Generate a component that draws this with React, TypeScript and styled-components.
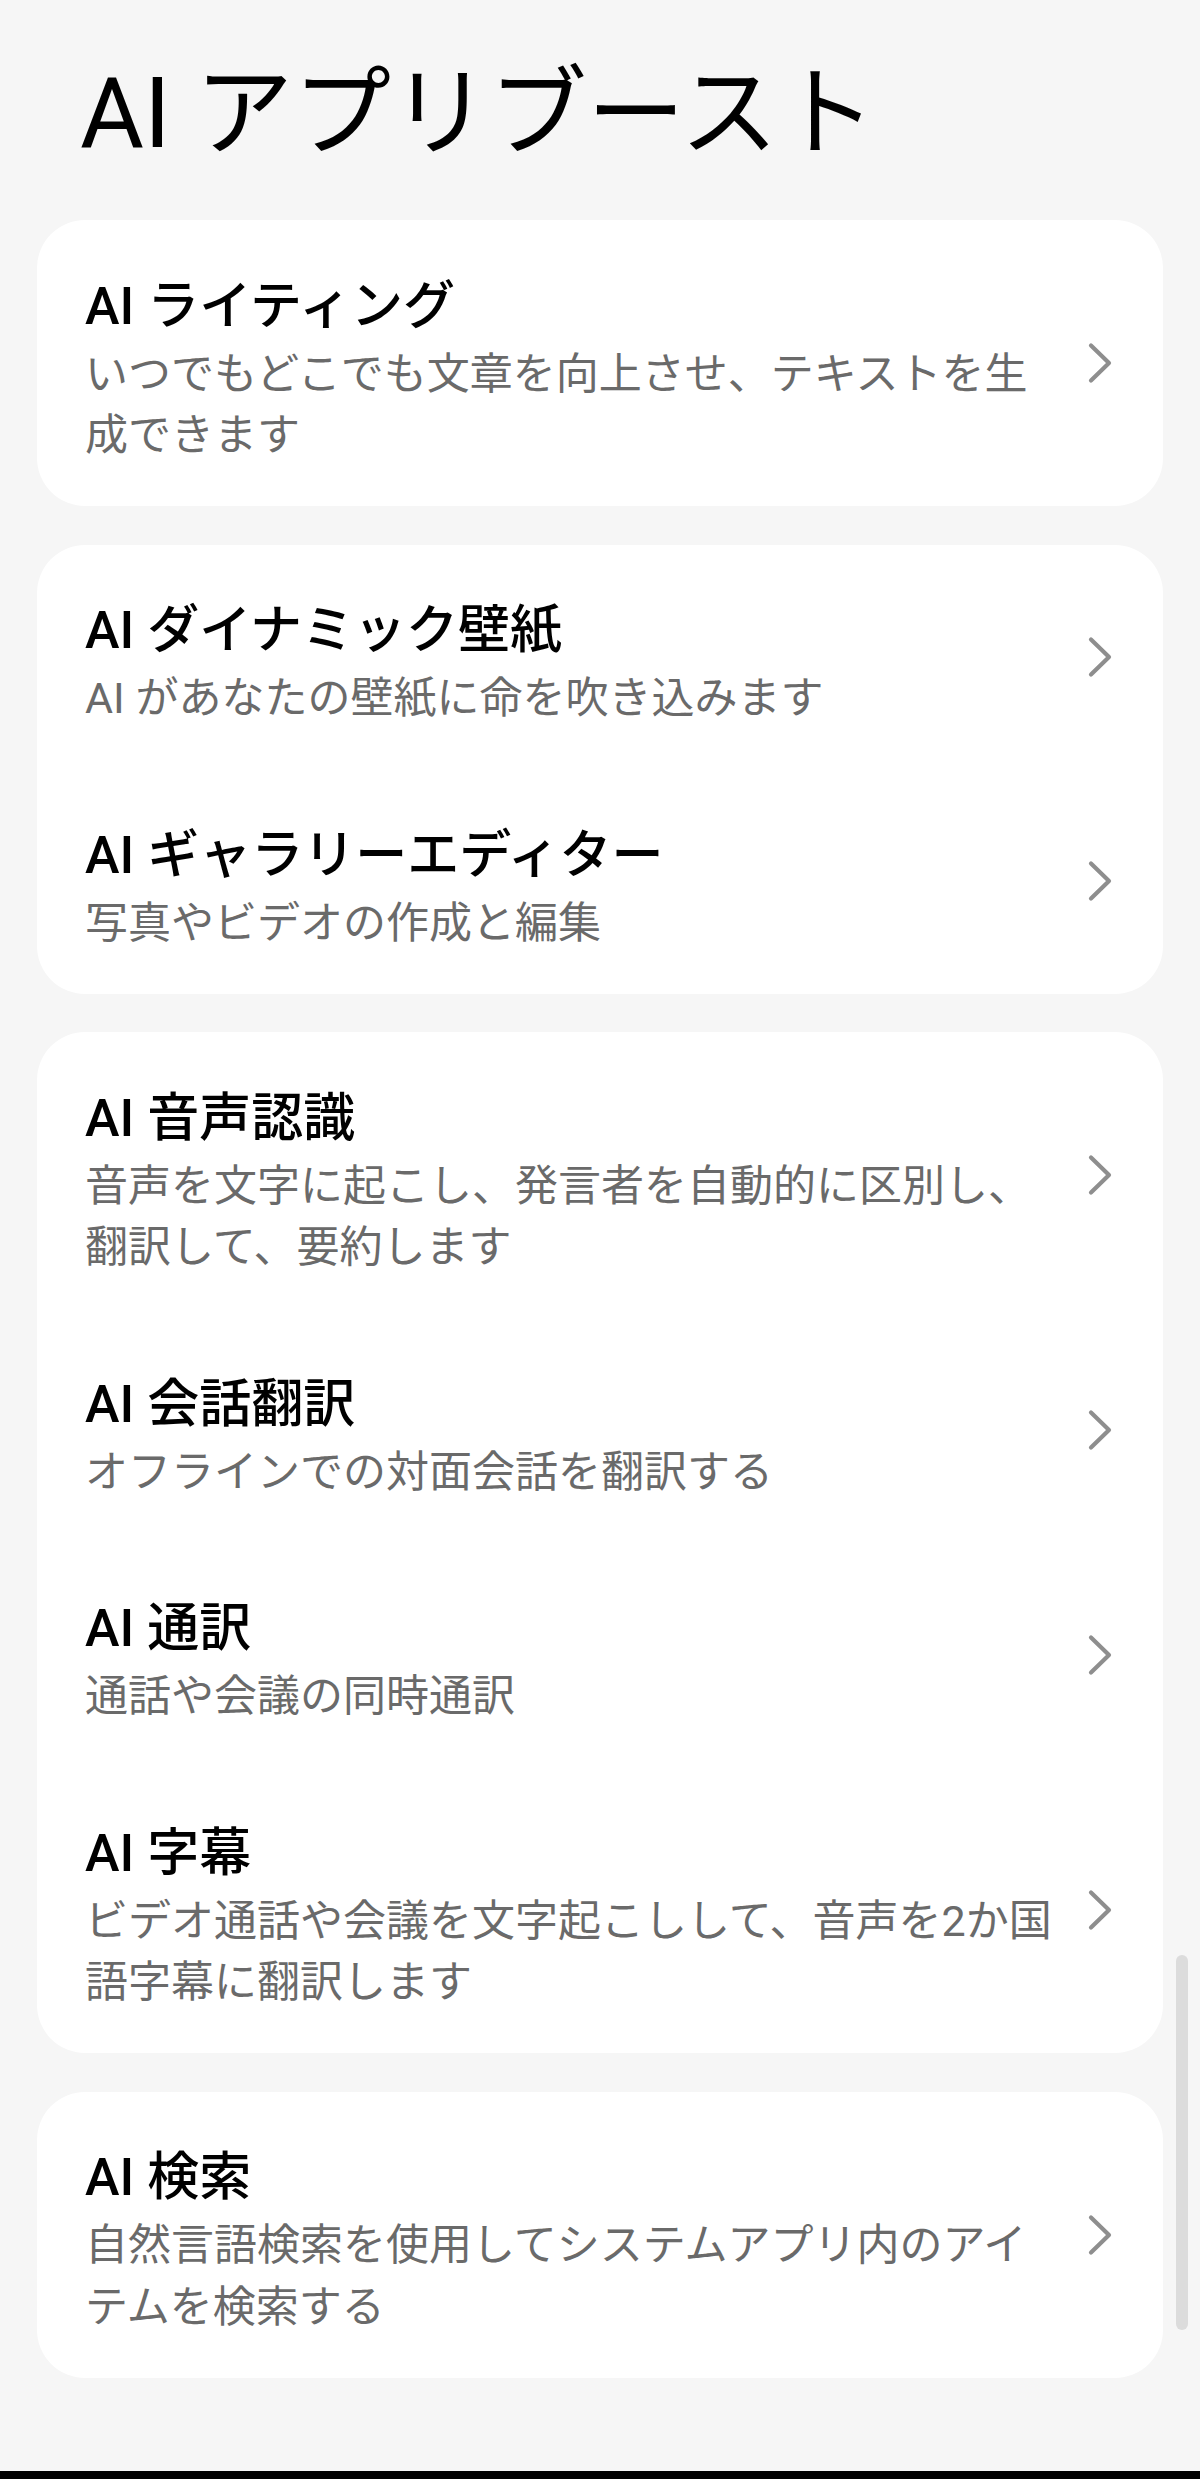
import React from "react";
import styled, { createGlobalStyle } from "styled-components";

const GlobalStyle = createGlobalStyle`
  html, body {
    margin: 0;
    padding: 0;
    background: #f6f6f6;
  }
  body {
    font-family: Roboto, "Noto Sans CJK JP", "Noto Sans", sans-serif;
    -webkit-font-smoothing: antialiased;
  }
`;

const Page = styled.div`
  position: relative;
  min-height: 2479px;
  display: flex;
  flex-direction: column;
  background: #f6f6f6;
`;

const Header = styled.h1`
  margin: 56px 0 49px 80px;
  font-size: 98px;
  line-height: 115px;
  font-weight: 400;
  color: #000;
  letter-spacing: 0;
`;

const CardList = styled.div`
  display: flex;
  flex-direction: column;
  gap: 38.5px;
  padding: 0 37px;
`;

const Card = styled.div`
  background: #ffffff;
  border-radius: 48px;
  display: flex;
  flex-direction: column;
  overflow: hidden;
`;

const Row = styled.div`
  display: flex;
  align-items: center;
  padding: 52.5px 49px 39.5px 48px;
`;

const TextBlock = styled.div`
  flex: 1;
  min-width: 0;
  display: flex;
  flex-direction: column;
  gap: 3px;
`;

const Title = styled.div`
  font-size: 52px;
  line-height: 68px;
  font-weight: 500;
  color: #000;
`;

const Subtitle = styled.div`
  font-size: 43px;
  line-height: 61.5px;
  font-weight: 400;
  color: #6a6a6a;
`;

const ChevronBox = styled.div`
  flex: none;
  width: 28px;
  height: 44px;
  margin-left: 24px;
  margin-top: -13px;
  display: flex;
  align-items: center;
  justify-content: center;
`;

const ScrollThumb = styled.div`
  position: absolute;
  right: 12px;
  top: 1955px;
  width: 12px;
  height: 375px;
  border-radius: 6px;
  background: #dcdcdc;
`;

const Spacer = styled.div`
  flex: 1;
`;

const NavBar = styled.div`
  height: 8px;
  background: #000;
`;

const Chevron = () => (
  <ChevronBox>
    <svg width="28" height="44" viewBox="0 0 28 44" fill="none">
      <path
        d="M5 4.5 L23 22 L5 39.5"
        stroke="#8e8e8e"
        strokeWidth="4.2"
        strokeLinecap="round"
        strokeLinejoin="round"
      />
    </svg>
  </ChevronBox>
);

type Item = { title: string; sub: string };

const groups: Item[][] = [
  [
    {
      title: "AI ライティング",
      sub: "いつでもどこでも文章を向上させ、テキストを生成できます",
    },
  ],
  [
    { title: "AI ダイナミック壁紙", sub: "AI があなたの壁紙に命を吹き込みます" },
    { title: "AI ギャラリーエディター", sub: "写真やビデオの作成と編集" },
  ],
  [
    {
      title: "AI 音声認識",
      sub: "音声を文字に起こし、発言者を自動的に区別し、翻訳して、要約します",
    },
    { title: "AI 会話翻訳", sub: "オフラインでの対面会話を翻訳する" },
    { title: "AI 通訳", sub: "通話や会議の同時通訳" },
    {
      title: "AI 字幕",
      sub: "ビデオ通話や会議を文字起こしして、音声を2か国語字幕に翻訳します",
    },
  ],
  [
    {
      title: "AI 検索",
      sub: "自然言語検索を使用してシステムアプリ内のアイテムを検索する",
    },
  ],
];

export default function App() {
  return (
    <Page>
      <GlobalStyle />
      <Header>AI アプリブースト</Header>
      <CardList>
        {groups.map((g, gi) => (
          <Card key={gi}>
            {g.map((it, i) => (
              <Row key={i}>
                <TextBlock>
                  <Title>{it.title}</Title>
                  <Subtitle>{it.sub}</Subtitle>
                </TextBlock>
                <Chevron />
              </Row>
            ))}
          </Card>
        ))}
      </CardList>
      <Spacer />
      <NavBar />
      <ScrollThumb />
    </Page>
  );
}
